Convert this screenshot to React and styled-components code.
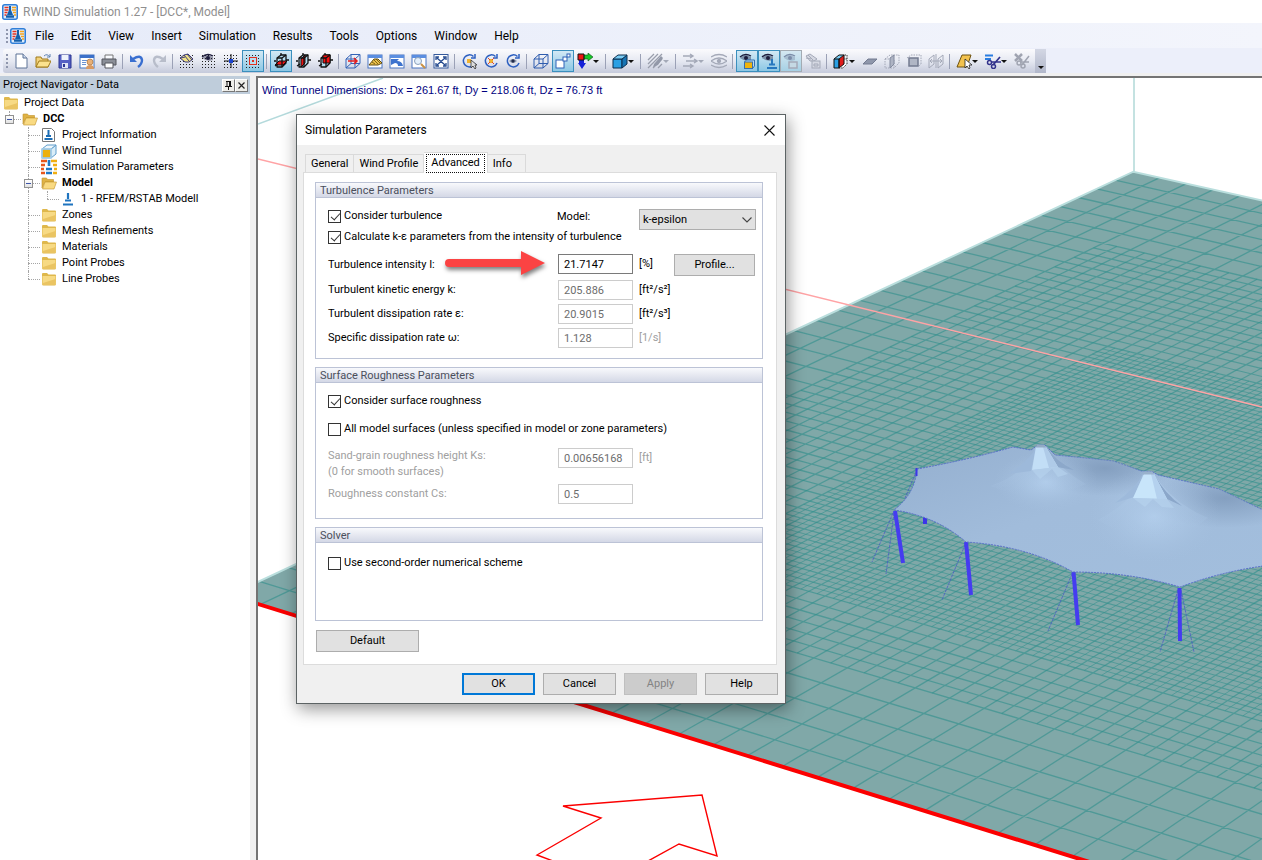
import * as React from "react"
import styled, { createGlobalStyle, css } from "styled-components"

const GlobalStyle = createGlobalStyle`
  * {
    box-sizing: border-box;
  }
  body {
    margin: 0;
    background: #f0f0f0;
    color: #000;
    font-family: Roboto, "Open Sans", sans-serif;
    font-size: 11px;
    line-height: 16px;
  }
  button, input, select {
    font: inherit;
    color: inherit;
    border-radius: 0;
    margin: 0;
  }
`

const menus = ["File", "Edit", "View", "Insert", "Simulation", "Results", "Tools", "Options", "Window", "Help"]

// ---------- icons ----------

const Logo = () => (
  <svg width="16" height="16" viewBox="0 0 16 16">
    <rect x=".75" y=".75" width="14.500" height="14.500" rx="2" fill="#dcebfa" stroke="#2f7ed8" strokeWidth="1.500" />
    <path d="M2.500 3.500h4M2.500 6h4M2.500 8.500h3M2.500 11h2" stroke="#e8321e" strokeWidth="1.600" />
    <path d="M10 3.500h4M10 6h4M11 8.500h3M12 11h2" stroke="#f6a51c" strokeWidth="1.600" />
    <path d="M7 2h2v4l2 5H5l2-5z" fill="#1460ac" />
    <path d="M4 12.500h8" stroke="#1460ac" strokeWidth="2.500" />
  </svg>
)

const dots = (
  <path
    d="M1 2.500h15M1 5.500h15M1 8.500h15M1 11.500h15M1 14.500h15"
    stroke="#222"
    strokeDasharray="1 2"
    fill="none"
  />
)

const eye = (c) => (
  <g>
    <path d="M1 5q5-5 11-1v3Q6 9 1 5z" fill={c} opacity=".4" />
    <path d="M1 4Q6-.5 12 3" stroke={c} strokeWidth="1.300" fill="none" />
    <circle cx="7" cy="5" r="2" fill={c} />
  </g>
)

const cube = (front, side, top, line) => (
  <g stroke={line} strokeLinejoin="round">
    <path d="M1 6h9v9H1z" fill={front} />
    <path d="M10 6l5-4v9l-5 4z" fill={side} />
    <path d="M1 6l5-4h9l-5 4z" fill={top} />
  </g>
)

const wire = (c) => (
  <path d="M1 6h9v9H1zM6 1.500h9v9H6zM1 6l5-4.500M10 6l5-4.500M10 15l5-4.500M1 15l5-4.500" fill="none" stroke={c} />
)

const plane = (fill, part) => (
  <g strokeLinejoin="round">
    <path d="M4 5l4-3h5v8l-4 4H4z" fill="#b5dcf0" stroke="#111" strokeWidth="1.300" />
    <path d={part} fill={fill} stroke="#111" />
    <path d="M4 5h5v9M9 5l4-3M1 8h2M13 7h3M2 13l3-2M8 0v2" stroke="#111" strokeWidth="1.300" fill="none" />
  </g>
)

const panel = (
  <g>
    <rect x="1" y="2" width="14" height="13" fill="#fff" stroke="#4a74c0" />
    <path d="M1 2h14v3H1z" fill="#5b8ee0" />
  </g>
)

const rotate = (
  <path d="M12.500 3.500A6 6 0 1 0 14 10M14 1v4h-4" fill="none" stroke="#2c5fc0" strokeWidth="1.500" />
)

const ghost = "#a4a9b8"

const icons = {
  new: (
    <g>
      <path d="M3 1h7l4 4v10H3z" fill="#fff" stroke="#5d7396" />
      <path d="M10 1v4h4" fill="#cfdcf0" stroke="#5d7396" />
    </g>
  ),
  open: (
    <g>
      <path d="M1 14V4h5l1 2h6v8z" fill="#f3d27b" stroke="#a07b1b" />
      <path d="M1 14l3-6h12l-3 6z" fill="#fbe28f" stroke="#a07b1b" />
      <path d="M9 3q3-3 6 1M15 1v3h-3" fill="none" stroke="#5f82b2" />
    </g>
  ),
  save: (
    <g>
      <path d="M2 2h12v13H2z" fill="#5560c4" stroke="#2b3590" />
      <path d="M4.500 2h7v5h-7z" fill="#eef2fb" />
      <path d="M5 10h6v5H5z" fill="#dfe4f5" />
      <path d="M6 11h2v3H6z" fill="#2b3590" />
    </g>
  ),
  info: (
    <g>
      <rect x="1" y="2" width="14" height="13" fill="#fff" stroke="#4574bd" />
      <path d="M1 2h14v3H1z" fill="#3b70c9" />
      <path d="M3 7.500h5M3 9.500h4M3 11.500h4" stroke="#6a93d2" />
      <circle cx="11" cy="9" r="3" fill="#e8b077" stroke="#9b6530" strokeWidth=".6" />
      <path d="M7 16q0-4 4-4t4 4z" fill="#d99a62" />
    </g>
  ),
  print: (
    <g>
      <path d="M4 2h8v5H4z" fill="#f8fafe" stroke="#777" />
      <path d="M1 6h14v6H1z" fill="#8b8f98" stroke="#54575e" />
      <path d="M4 10h8v5H4z" fill="#fff" stroke="#54575e" />
    </g>
  ),
  undo: (
    <g>
      <path d="M4 6q8-5 9 1 0 4-4 7" fill="none" stroke="#3a6fd0" strokeWidth="2.400" />
      <path d="M1 2v7h7z" fill="#3a6fd0" />
    </g>
  ),
  redo: (
    <g>
      <path d="M12 6Q4 1 3 7q0 4 4 7" fill="none" stroke="#b8bdca" strokeWidth="2.400" />
      <path d="M15 2v7H8z" fill="#b8bdca" />
    </g>
  ),
  gridHand: (
    <g>
      {dots}
      <path d="M1 5l4-3 4-1 5 5-4 3-4 0z" fill="#f1e287" stroke="#3a3a78" />
      <path d="M5 2l5 6M8 1l5 6M2 5l4-1" stroke="#3a3a78" />
    </g>
  ),
  gridEye: (
    <g>
      {dots}
      {eye("#1c1c3c")}
    </g>
  ),
  gridCross: (
    <g>
      {dots}
      <path d="M1 8h14M8 1v14" stroke="#111" />
      <rect x="6" y="6" width="4" height="4" fill="#1b43d0" />
    </g>
  ),
  gridSnap: (
    <g>
      {dots}
      <rect x="3" y="3" width="10" height="10" fill="#b9dcee" />
      <rect x="4.500" y="4.500" width="7" height="7" fill="none" stroke="#e03020" />
      <rect x="7" y="7" width="2" height="2" fill="#e03020" />
    </g>
  ),
  planeXY: plane("#e81414", "M2 12l4-4h8l-4 4z"),
  planeYZ: plane("#e81414", "M6 6l4-4v8l-4 4z"),
  planeXZ: plane("#fb1010", "M6 2h7v8H6z"),
  boxArrow: (
    <g>
      {wire("#3464b8")}
      <path d="M3 8h9M9 5l3 3-3 3" stroke="#e81c1c" strokeWidth="1.500" fill="none" />
    </g>
  ),
  winHand: (
    <g>
      {panel}
      <path d="M2 12l5-6h4l4 4-4 2z" fill="#ecc14b" stroke="#604b10" />
      <path d="M7 7l4 4M9 6l4 4M5 9l3 2" stroke="#604b10" strokeWidth=".8" />
    </g>
  ),
  winBack: (
    <g>
      {panel}
      <path d="M2 6h8L8 8q5 0 6 5H9q0-3-3-3l-4 2z" fill="#3d73ce" />
    </g>
  ),
  winZoom: (
    <g>
      {panel}
      <circle cx="7" cy="8" r="3.500" fill="#e3effb" stroke="#8ba0bb" />
      <path d="M10 11l4 4" stroke="#c99043" strokeWidth="2" />
    </g>
  ),
  winFit: (
    <g>
      <rect x="1" y="1.500" width="14" height="13.500" fill="#fff" stroke="#35599b" />
      <path d="M4 5l8 7M12 5l-8 7M3 7V4h3M10 4h3v3M13 10v3h-3M6 13H3v-3" stroke="#24498f" strokeWidth="1.300" fill="none" />
    </g>
  ),
  rotCursor: (
    <g>
      {rotate}
      <rect x="6" y="6" width="4" height="4" fill="#f0b32f" />
      <path d="M10 7v8l2-2 2 3 1-1-1-3h2z" fill="#ddd" stroke="#333" strokeWidth=".8" />
    </g>
  ),
  rotCenter: (
    <g>
      {rotate}
      <rect x="6" y="6" width="4" height="4" fill="#f0b32f" />
      <path d="M5 5l2 2M11 5L9 7M5 11l2-2M11 11l-2-2" stroke="#e34b24" />
    </g>
  ),
  rotView: (
    <g>
      {rotate}
      <path d="M4 8q4-4 8 0-4 4-8 0z" fill="#8e98ad" />
      <circle cx="8" cy="8" r="1.700" fill="#222c4c" />
    </g>
  ),
  wire: wire("#2f5cae"),
  perspective: (
    <g fill="#fff" stroke="#2f63b8">
      <rect x="1" y="7" width="8" height="8" />
      <rect x="8" y="4" width="4" height="4" />
      <rect x="12" y="1" width="3" height="3" />
    </g>
  ),
  axes: (
    <g>
      <path d="M1 1h6v6H1z" fill="#ee1414" />
      <path d="M7 2h4V0l5 4-5 4V6H7z" fill="#17c62a" stroke="#0b5015" strokeWidth=".6" />
      <path d="M2 7h5v3h2l-4 6-4-6h1z" fill="#1522d8" />
      <path d="M1 1h6v6H1z" fill="none" stroke="#111" />
    </g>
  ),
  solid: cube("#2ba0e3", "#1674b4", "#79ccf5", "#0c2f4e"),
  hatch: (
    <g>
      <path d="M1 7l6-6M1 11L11 1M1 15L15 1M6 15L15 6M11 15l4-4" stroke="#999eac" strokeWidth="1.300" />
      <path d="M7 11l7-8 2 2-5 7-5 2z" fill="#9298a8" />
    </g>
  ),
  flow: <path d="M1 3h10M8 1l3 2-3 2M4 8h11M12 6l3 2-3 2M1 13h10M8 11l3 2-3 2" stroke={ghost} strokeWidth="1.400" fill="none" />,
  stream: (
    <g stroke={ghost} strokeWidth="1.300" fill="none">
      <path d="M0 4q8-5 16 0M0 8q8-6 16 0M0 8q8 6 16 0M0 12q8 5 16 0" />
      <circle cx="8" cy="8" r="1.500" fill={ghost} />
    </g>
  ),
  eyeBox: (
    <g>
      {eye("#1c1c3c")}
      <path d="M5.500 9l2-2h8v6l-2 2.500" fill="#b9dcf2" stroke="#356fb0" />
      <rect x="5.500" y="9" width="8" height="6.500" fill="#efb40d" stroke="#356fb0" />
    </g>
  ),
  eyeModel: (
    <g>
      {eye("#1c1c3c")}
      <path d="M11 6v6M8 11.500h6M6 15h10" stroke="#2878bf" strokeWidth="2" />
    </g>
  ),
  eyeGhost: (
    <g>
      {eye("#7b8ca8")}
      <rect x="6" y="9" width="8" height="6" fill="#c5d9e4" stroke={ghost} strokeWidth="1.500" />
    </g>
  ),
  handGhost: (
    <g stroke={ghost} fill="#d5d8e2">
      <path d="M1 3l4-2 7 5-3 2H5zM3 2l5 5M1 5l5 1" />
      <rect x="7" y="8" width="8" height="7" />
      <path d="M9 11h4v2H9z" />
    </g>
  ),
  clipBox: (
    <g>
      <path d="M10 6h4v5l-4 4H6M14 6V2h-3" fill="#f7f9fc" stroke="#333" strokeDasharray="1.500 1" />
      <path d="M1 6h5v9H1z" fill="#2ba0e3" />
      <path d="M1 6l5-4h5L6 6z" fill="#79ccf5" />
      <path d="M6 6l5-4v9l-5 4z" fill="#e01c1c" stroke="#111" />
      <path d="M1 6h5v9H1zM1 6l5-4h5" fill="none" stroke="#111" />
    </g>
  ),
  faceBottom: <path d="M1 11l5-5h9l-5 5z" fill="#8f97ab" stroke="#737b90" />,
  faceSide: (
    <g stroke={ghost} fill="none">
      <path d="M1 6h9v9H1zM1 6l5-4h9v8l-5 5" strokeDasharray="1.500 1" />
      <path d="M6 5l4-3v9l-4 4z" fill="#adb3c3" stroke="#828a9e" />
    </g>
  ),
  faceFront: (
    <g>
      <path d="M1 5l4-3h10v9l-2 2" fill="none" stroke={ghost} strokeDasharray="1.500 1" />
      <path d="M3 5h9v8H3z" fill="#b0b6c5" stroke="#737b90" strokeWidth="1.500" />
    </g>
  ),
  faceMirror: (
    <g stroke={ghost} fill="none">
      <path d="M1 6v9l5-4V2zM10 6v9l5-4V2zM8 1v14M2 8h12M4 6L2 8l2 2M12 6l2 2-2 2" />
    </g>
  ),
  polySelect: (
    <g>
      <path d="M1 14L6 2h9l-4 12z" fill="#f2c24e" stroke="#6e5210" />
      <path d="M9 6v9l2-2 2 3 1-1-1-3h3z" fill="#fff" stroke="#222" strokeWidth=".8" />
    </g>
  ),
  cutLines: (
    <g>
      <path d="M0 2.500h8M0 6h6" stroke="#2a7de0" strokeWidth="2" />
      <path d="M15 4L8 12M16 9L6 9" stroke="#32328c" strokeWidth="1.700" />
      <circle cx="4.500" cy="9.500" r="2" fill="none" stroke="#32328c" strokeWidth="1.500" />
      <circle cx="8.500" cy="13.500" r="2" fill="none" stroke="#32328c" strokeWidth="1.500" />
    </g>
  ),
  cutGhost: (
    <g stroke="#a0a4b1" fill="none" strokeWidth="1.500">
      <path d="M1 1l7 7M8 1L1 8" strokeWidth="2.500" />
      <path d="M15 3L8 12M15 9H6" />
      <circle cx="5" cy="10" r="2" />
      <circle cx="9" cy="13" r="2" />
    </g>
  ),
}

const tools = [
  ["new"], ["open"], ["save"], ["info"], ["print"], "|",
  ["undo"], ["redo"], "|",
  ["gridHand"], ["gridEye"], ["gridCross"], ["gridSnap", "on"], "|",
  ["planeXY", "on"], ["planeYZ"], ["planeXZ"], "|",
  ["boxArrow"], ["winHand"], ["winBack"], ["winZoom"], ["winFit"], "|",
  ["rotCursor"], ["rotCenter"], ["rotView"], "|",
  ["wire"], ["perspective", "on"], ["axes", "drop"], "|",
  ["solid", "drop"], "|",
  ["hatch", "drop"], "|",
  ["flow", "drop"], ["stream"], "|",
  ["eyeBox", "on"], ["eyeModel", "on"], ["eyeGhost", "dim"], ["handGhost"], "|",
  ["clipBox", "drop"], ["faceBottom"], ["faceSide"], ["faceFront"], ["faceMirror"], "|",
  ["polySelect", "drop"], ["cutLines", "drop"], ["cutGhost"],
]

const ToolIcon = ({ name }) => (
  <svg width="16" height="16" viewBox="0 0 16 16" aria-hidden="true">
    {icons[name]}
  </svg>
)

const treeIcons = {
  folder: (
    <g>
      <path d="M1 3q0-1 1-1h4l1.500 1.500H14q1 0 1 1V13q0 1.500-1.500 1.500h-11Q1 14.500 1 13z" fill="#dfb84c" />
      <path d="M1.500 5h13v8q0 1-1 1h-11q-1 0-1-1z" fill="#f7da84" />
      <path d="M2 14h12l.5-6L2 12z" fill="#eac462" />
    </g>
  ),
  open: (
    <g>
      <path d="M1 13V3.500q0-.500.500-.500h4l1 1.500h6V7H4z" fill="#dfb245" stroke="#c1922a" strokeWidth=".6" />
      <path d="M1.500 14L4 7h11.500L13 14z" fill="#f9da82" stroke="#c1922a" strokeWidth=".6" />
    </g>
  ),
  doc: (
    <g>
      <path d="M1.500 1.500h9l3 3v10h-12z" fill="#fff" stroke="#777" />
      <path d="M7.500 3v5M5 9h5M3.500 12h8" stroke="#1b6db5" strokeWidth="2" />
    </g>
  ),
  tunnel: (
    <g>
      {cube("#ecb00d", "#d9edf8", "#eef7fc", "#5f9dcc")}
      <path d="M1 6h9v9H1z" fill="none" stroke="#a8d0ea" strokeWidth="1.500" />
    </g>
  ),
  params: (
    <g strokeWidth="2.600">
      <path d="M0 2h6M0 6h4M0 10h3M0 14h4" stroke="#e7571c" />
      <path d="M10 2h6M12 6h4M13 10h3M12 14h4" stroke="#f0ae12" />
      <path d="M8 1v6M5 10h6M5 14h6" stroke="#1f7ac8" />
    </g>
  ),
  model: (
    <path d="M8 2v6M5 9.500h6M3 13.500h10" stroke="#1f74bf" strokeWidth="2.200" />
  ),
}

const TreeIcon = ({ name }) => (
  <svg width="16" height="16" viewBox="0 0 16 16" aria-hidden="true">
    {treeIcons[name]}
  </svg>
)

// guides: one entry per indent column
const tree = [
  { text: "Project Data", icon: "folder", guides: [] },
  { text: "DCC", icon: "open", guides: ["end"], expand: true, bold: true },
  { text: "Project Information", icon: "doc", guides: ["none", "tee"] },
  { text: "Wind Tunnel", icon: "tunnel", guides: ["none", "tee"] },
  { text: "Simulation Parameters", icon: "params", guides: ["none", "tee"] },
  { text: "Model", icon: "open", guides: ["none", "tee"], expand: true, bold: true },
  { text: "1 - RFEM/RSTAB Modell", icon: "model", guides: ["none", "line", "end"] },
  { text: "Zones", icon: "folder", guides: ["none", "tee"] },
  { text: "Mesh Refinements", icon: "folder", guides: ["none", "tee"] },
  { text: "Materials", icon: "folder", guides: ["none", "tee"] },
  { text: "Point Probes", icon: "folder", guides: ["none", "tee"] },
  { text: "Line Probes", icon: "folder", guides: ["none", "end"] },
]

// ---------- wind tunnel scene ----------

const project = (u, v) => {
  const w = 1 - 0.00323 * u - 0.0057 * v
  const x = 1133.3 + (26.4 * u - 18.02 * v) / w
  const y = 171.7 + (5.92 * u + 8.446 * v) / w
  return x.toFixed(1) + " " + y.toFixed(1)
}

const range = (from, to, step) => {
  const out = []
  for (let i = from; i <= to; i += step) out.push(i)
  return out
}

const meshPath = (u0, u1, v0, v1, first, step) =>
  range(u0 + first, u1, step).map(u => `M${project(u, v0)}L${project(u, v1)}`).join("") +
  range(v0 + first, v1, step).map(v => `M${project(u0, v)}L${project(u1, v)}`).join("")

const coarse = meshPath(0, 40, 0, 39, 1, 1)
const medium = meshPath(3, 36, 6, 34, 0.5, 1)
const fine = meshPath(8, 32, 13, 31, 0.25, 0.5)

const roof =
  "M917 469Q967 460 1013 447L1031 450L1038 445L1045 445L1055 455Q1086 458 1113 461Q1128 466 1141 471L1152 471.500L1158 475L1219 489L1263 510" +
  "V566Q1220 572 1180 587Q1130 572 1073 572Q1028 546 966 542Q936 516 894 510Q915 494 917 469Z"

const posts = [
  [895, 511, 903, 563],
  [966, 542, 971, 595],
  [1073.500, 572, 1078, 625],
  [1179.500, 588, 1180, 641],
]

const Scene = () => (
  <SceneSvg viewBox="258 78 1004 782" preserveAspectRatio="xMinYMin slice" role="img" aria-label="Wind tunnel model">
    <defs>
      <linearGradient id="roof" x1="0" y1="0" x2="1" y2="1">
        <stop offset="0" stopColor="#94afcf" />
        <stop offset=".45" stopColor="#a1bcdb" />
        <stop offset="1" stopColor="#a2bedd" />
      </linearGradient>
      <radialGradient id="back">
        <stop offset="0" stopColor="#7d98b9" stopOpacity=".8" />
        <stop offset="1" stopColor="#7d98b9" stopOpacity="0" />
      </radialGradient>
      <radialGradient id="glow">
        <stop offset="0" stopColor="#bad6f3" stopOpacity=".8" />
        <stop offset="1" stopColor="#a5c0df" stopOpacity="0" />
      </radialGradient>
      <linearGradient id="flare" x1="0" y1="0" x2="0" y2="1">
        <stop offset="0" stopColor="#afcbe9" />
        <stop offset="1" stopColor="#a5c0df" stopOpacity="0" />
      </linearGradient>
      <clipPath id="roofClip">
        <path d={roof} />
      </clipPath>
    </defs>
    <path d={`M${project(0, 0)}L${project(40, 0)}L${project(40, 39)}L${project(0, 39)}Z`} fill="#80a8a8" />
    <g fill="none" stroke="#2f8f8c" strokeOpacity=".6">
      <path d={coarse} strokeWidth="1.300" />
      <path d={medium} strokeWidth="1.200" />
      <path d={fine} strokeWidth=".9" />
    </g>
    <path d={`M${project(0, 39)}L${project(0, 0)}L${project(40, 0)}`} fill="none" stroke="#b9dedd" strokeWidth="2" />
    <path d="M1134 171V78" stroke="#b0d8d7" strokeWidth="1.500" />
    <path d="M258 124L383 78" stroke="#b4dadc" strokeWidth="1.500" />
    <path d="M258 159L1262 407" stroke="#ffa3a5" strokeWidth="1.500" />
    <path d="M250 601.500L1262 915.500" stroke="#fb0000" strokeWidth="4" />
    <path d="M553 861L537 855L601 818L563 806L702 795L717 856L679 844L648 861" fill="none" stroke="#fb0000" strokeWidth="1.400" />
    <g stroke="#4b5bc4" strokeWidth=".8" strokeDasharray="3 1">
      <path d="M893 513L872 562M894 513L886 574M965 545L942 600M1072 574L1048 631M1178 590L1160 652M1181 590L1194 652M917 470L905 498" />
    </g>
    <path d="M925 516v8" stroke="#3c35e8" strokeWidth="4" />
    <g stroke="#453cf0" strokeWidth="4">
      {posts.map(([x1, y1, x2, y2]) => (
        <path key={x1} d={`M${x1} ${y1}L${x2} ${y2}`} />
      ))}
    </g>
    <path d={roof} fill="url(#roof)" stroke="#5566c9" strokeWidth=".9" strokeDasharray="2 1" />
    <g clipPath="url(#roofClip)">
      <ellipse cx="1105" cy="468" rx="72" ry="28" fill="url(#back)" />
      <ellipse cx="1225" cy="498" rx="80" ry="30" fill="url(#back)" />
      <ellipse cx="1046" cy="482" rx="52" ry="30" fill="url(#glow)" />
      <ellipse cx="1154" cy="516" rx="66" ry="48" fill="url(#glow)" />
    </g>
    <path d="M1036 447Q1026 474 990 486Q1040 506 1086 484Q1060 470 1047 447Z" fill="url(#flare)" />
    <path d="M1143 474Q1136 500 1098 520Q1155 556 1208 518Q1172 503 1154 474Z" fill="url(#flare)" />
    <path d="M1036 447Q1029 462 1008 474L1031 471Z" fill="#9db9da" />
    <path d="M1036 447L1047 447Q1055 461 1074 470L1057 467Z" fill="#8ca8ca" />
    <path d="M1036 447L1046 447L1058 467L1032 470Z" fill="#c2def6" />
    <path d="M1043 447L1046 447L1058 467L1049 468Z" fill="#afcbe8" />
    <path d="M1037 444.500h7l2 3h-10z" fill="#93aac5" />
    <path d="M1143 474Q1136 488 1115 503L1134 497Z" fill="#9ebadb" />
    <path d="M1143 474L1154 474Q1165 494 1182 506L1167 499Z" fill="#8ba7ca" />
    <path d="M1144 474L1154 474L1167 499L1133 498Z" fill="#c8e5fa" />
    <path d="M1151 474L1154 474L1167 499L1157 499Z" fill="#b4d1ee" />
    <path d="M1144 471.500h8l2 3h-11z" fill="#9ab2cc" />
    <path d="M1032 470l8 9 12-10 6 8 10-3-10-7zM1133 498l12 9 8-8 9 8 12 1-7-9z" fill="#b7d3ef" opacity=".6" />
    <path d="M916.500 468v8" stroke="#3c35e8" strokeWidth="2" />
  </SceneSvg>
)

// ---------- page ----------

const Check = ({ id, children, checked }) => (
  <CheckRow>
    <CheckBox type="checkbox" id={id} defaultChecked={checked} />
    <label htmlFor={id}>{children}</label>
  </CheckRow>
)

const Field = ({ id, label, value, unit, disabled, unitDisabled, labelDisabled, children }) => (
  <FieldRow>
    <FieldLabel htmlFor={id} $muted={labelDisabled}>{label}</FieldLabel>
    <TextBox id={id} defaultValue={value} disabled={disabled} />
    <Unit $muted={unitDisabled}>{unit}</Unit>
    {children}
  </FieldRow>
)

const SimulationDialog = () => (
  <Dialog role="dialog" aria-labelledby="dialog-title">
    <DialogTitle>
      <span id="dialog-title">Simulation Parameters</span>
      <CloseButton aria-label="Close">
        <svg width="11" height="11" viewBox="0 0 11 11">
          <path d="M.5.5l10 10M10.500.5l-10 10" stroke="#111" strokeWidth="1.100" />
        </svg>
      </CloseButton>
    </DialogTitle>
    <Tabs role="tablist">
      <Tab role="tab">General</Tab>
      <Tab role="tab">Wind Profile</Tab>
      <Tab role="tab" aria-selected="true" $active><span>Advanced</span></Tab>
      <Tab role="tab" $wide>Info</Tab>
    </Tabs>
    <TabPanel>
      <Group>
        <GroupTitle>Turbulence Parameters</GroupTitle>
        <ModelRow>
          <Check id="turb" checked>Consider turbulence</Check>
          <label htmlFor="model">Model:</label>
          <SelectWrap>
            <Select id="model" defaultValue="k-epsilon">
              <option>k-epsilon</option>
            </Select>
            <svg width="10" height="6" viewBox="0 0 10 6" aria-hidden="true">
              <path d="M.5.5L5 5L9.500.5" fill="none" stroke="#444" strokeWidth="1.100" />
            </svg>
          </SelectWrap>
        </ModelRow>
        <Check id="calc" checked>Calculate k-ε parameters from the intensity of turbulence</Check>
        <Fields>
          <Field id="intensity" label="Turbulence intensity I:" value="21.7147" unit="[%]">
            <ProfileButton>Profile...</ProfileButton>
          </Field>
          <Field id="energy" label="Turbulent kinetic energy k:" value="205.886" unit="[ft²/s²]" disabled />
          <Field id="eps" label="Turbulent dissipation rate ε:" value="20.9015" unit="[ft²/s³]" disabled />
          <Field id="omega" label="Specific dissipation rate ω:" value="1.128" unit="[1/s]" disabled unitDisabled />
        </Fields>
      </Group>
      <Group>
        <GroupTitle>Surface Roughness Parameters</GroupTitle>
        <CheckStack>
          <Check id="rough" checked>Consider surface roughness</Check>
          <Check id="all">All model surfaces (unless specified in model or zone parameters)</Check>
        </CheckStack>
        <RoughnessFields>
          <Field
            id="ks"
            label={<>Sand-grain roughness height Ks:<br />(0 for smooth surfaces)</>}
            value="0.00656168"
            unit="[ft]"
            disabled
            unitDisabled
            labelDisabled
          />
          <Field id="cs" label="Roughness constant Cs:" value="0.5" disabled labelDisabled />
        </RoughnessFields>
      </Group>
      <Group>
        <GroupTitle>Solver</GroupTitle>
        <SolverBody>
          <Check id="second">Use second-order numerical scheme</Check>
        </SolverBody>
      </Group>
      <DefaultButton>Default</DefaultButton>
    </TabPanel>
    <Actions>
      <ActionButton $primary>OK</ActionButton>
      <ActionButton>Cancel</ActionButton>
      <ActionButton disabled>Apply</ActionButton>
      <ActionButton>Help</ActionButton>
    </Actions>
    <Pointer width="110" height="36" viewBox="0 0 110 36" aria-hidden="true">
      <path d="M8 10h72V2l24 12-24 12v-8H8a4 4 0 0 1 0-8z" fill="#fb4343" />
    </Pointer>
  </Dialog>
)

const App = () => (
  <Window>
    <GlobalStyle />
    <TitleBar>
      <Logo />
      <span>RWIND Simulation 1.27 - [DCC*, Model]</span>
    </TitleBar>
    <MenuBar>
      <Grip />
      <Logo />
      <MenuItems>
        {menus.map(m => (
          <MenuButton key={m}>{m}</MenuButton>
        ))}
      </MenuItems>
    </MenuBar>
    <ToolArea>
      <Toolbar>
        <Grip />
        {tools.map((t, i) =>
          t === "|" ? (
            <Separator key={i} />
          ) : (
            <ToolButton key={i} aria-label={t[0]} $mode={t[1]}>
              <ToolIcon name={t[0]} />
              {t[1] === "drop" && <Caret $muted={t[0] === "hatch" || t[0] === "flow"} />}
            </ToolButton>
          )
        )}
        <ToolEnd aria-label="More buttons">
          <Caret />
        </ToolEnd>
      </Toolbar>
    </ToolArea>
    <Workspace>
      <Navigator>
        <NavigatorHeader>
          <span>Project Navigator - Data</span>
          <PaneButton aria-label="Pin">
            <svg width="9" height="9" viewBox="0 0 9 9">
              <path d="M2 .5h5M3 .5v5M5.500.5v5M6.500.5v5M1 5.500h7M4.500 5.500V9" stroke="#111" fill="none" />
            </svg>
          </PaneButton>
          <PaneButton aria-label="Close pane">
            <svg width="7" height="7" viewBox="0 0 7 7">
              <path d="M.5.5l6 6M6.500.5l-6 6" stroke="#222" strokeWidth="1.200" />
            </svg>
          </PaneButton>
        </NavigatorHeader>
        <Tree>
          {tree.map(item => (
            <TreeRow key={item.text}>
              {item.guides.map((g, i) => (
                <Guide key={i} $kind={g}>
                  {item.expand && i === item.guides.length - 1 && <Expander aria-label={"Collapse " + item.text} />}
                </Guide>
              ))}
              <TreeIcon name={item.icon} />
              <TreeText $bold={item.bold}>{item.text}</TreeText>
            </TreeRow>
          ))}
        </Tree>
      </Navigator>
      <Viewport>
        <Scene />
        <Dimensions>Wind Tunnel Dimensions: Dx = 261.67 ft, Dy = 218.06 ft, Dz = 76.73 ft</Dimensions>
        <SimulationDialog />
      </Viewport>
    </Workspace>
  </Window>
)

export default App

const Window = styled.div`
  display: flex;
  flex-direction: column;
  height: 100vh;
  overflow: hidden;
`
const TitleBar = styled.header`
  display: flex;
  align-items: center;
  gap: 5px;
  height: 23px;
  padding: 0 2px;
  background: #fff;
  color: #8f8f8f;
  font-size: 12px;
`
const MenuBar = styled.nav`
  display: flex;
  align-items: center;
  height: 25px;
  padding-left: 6px;
  background: linear-gradient(90deg, #e6ebf9, #f3f5fc);
`
const MenuItems = styled.div`
  display: flex;
  gap: 17px;
  margin-left: 9px;
`
const MenuButton = styled.button`
  padding: 0;
  border: none;
  background: none;
  font-size: 12px;
`
const Grip = styled.span`
  flex: none;
  width: 2px;
  height: 14px;
  margin-right: 2px;
  background: repeating-linear-gradient(#8f96ad 0 2px, transparent 2px 4px);
`
const ToolArea = styled.div`
  display: flex;
  flex: none;
  height: 28px;
  padding: 1px 3px 3px;
  background: linear-gradient(#eceffa 0 25px, #f0f0f0 25px);
`
const Toolbar = styled.div`
  display: flex;
  align-items: center;
  padding-left: 3px;
  border-radius: 3px;
  background: linear-gradient(#fbfbfd, #e6e9f2 50%, #c5cadb);
`
const ToolButton = styled.button`
  display: flex;
  flex: none;
  align-items: center;
  width: ${props => (props.$mode === "drop" ? "29px" : "22px")};
  height: 22px;
  padding: 0 2px;
  border: 1px solid transparent;
  background: none;

  svg {
    flex: none;
  }
  ${props => props.$mode === "on" && css`
    border-color: #3b8fbd;
    background: linear-gradient(#d3e9f5, #8cc7e4);
  `}
  ${props => props.$mode === "dim" && css`
    border-color: #a3abb3;
    background: linear-gradient(#d5e8f2, #a6d0e4);
  `}
`
const Caret = styled.span`
  flex: none;
  border: 3px solid transparent;
  border-top-color: ${props => (props.$muted ? "#a4a9b8" : "#111")};
  border-bottom: none;
`
const Separator = styled.span`
  flex: none;
  width: 1px;
  height: 15px;
  margin: 0 3px 0 2px;
  background: #9ba1b6;
`
const ToolEnd = styled.button`
  display: flex;
  align-items: flex-end;
  justify-content: center;
  width: 11px;
  height: 24px;
  margin-left: 2px;
  padding: 0 0 4px;
  border: none;
  background: linear-gradient(#d3d7e4, #b1b7ca);
`
const Workspace = styled.div`
  display: flex;
  flex: 1;
  min-height: 0;
`
const Navigator = styled.aside`
  flex: none;
  width: 250px;
  margin-right: 6px;
  background: #fff;
`
const NavigatorHeader = styled.div`
  display: flex;
  align-items: center;
  height: 18px;
  padding: 0 2px 0 3px;
  background: #bfcddb;

  span {
    flex: 1;
  }
`
const PaneButton = styled.button`
  display: flex;
  align-items: center;
  justify-content: center;
  width: 13px;
  height: 13px;
  padding: 0;
  border: 1px solid;
  border-color: #fff #777 #777 #fff;
  background: #eeeeea;
`
const Tree = styled.ul`
  margin: 0;
  padding: 1px 3px;
  list-style: none;
`
const TreeRow = styled.li`
  display: flex;
  align-items: center;
  height: 16px;
`
const TreeText = styled.span`
  margin-left: 5px;
  font-weight: ${props => (props.$bold ? "bold" : "normal")};
`
const Guide = styled.span`
  display: grid;
  width: 19px;
  height: 16px;
  padding-left: 6px;

  &::before {
    content: "";
    grid-area: 1 / 1;
    width: 12px;
    height: ${props => (props.$kind === "end" ? "8px" : "16px")};
    border-left: ${props => (props.$kind === "none" ? "none" : "1px dotted #a5a5a5")};
  }
  &::after {
    content: "";
    grid-area: 1 / 1;
    width: 12px;
    height: 8px;
    border-bottom: ${props => (props.$kind === "tee" || props.$kind === "end" ? "1px dotted #a5a5a5" : "none")};
  }
`
const Expander = styled.button`
  grid-area: 1 / 1;
  z-index: 1;
  width: 9px;
  height: 9px;
  margin: 4px 0 0 -4px;
  padding: 0;
  border: 1px solid #919191;
  background: linear-gradient(#3d55a8, #3d55a8) center / 5px 1px no-repeat, linear-gradient(#fff, #e2e2e2);
`
const Viewport = styled.main`
  position: relative;
  flex: 1;
  min-width: 0;
  overflow: hidden;
  border-top: 2px solid #747474;
  border-left: 2px solid #747474;
  background: #fff;
`
const SceneSvg = styled.svg`
  display: block;
  width: 100%;
  height: 100%;
`
const Dimensions = styled.span`
  position: absolute;
  top: 4px;
  left: 4px;
  color: #000080;
  font-family: "Liberation Sans", sans-serif;
`
const Dialog = styled.section`
  position: absolute;
  top: 36px;
  left: 38px;
  width: 490px;
  border: 1px solid #5c6364;
  background: #f0f0f0;
  box-shadow: 2px 5px 16px rgba(0, 0, 0, 0.42);
`
const DialogTitle = styled.div`
  display: flex;
  align-items: center;
  justify-content: space-between;
  height: 30px;
  padding: 0 10px 0 8px;
  background: #fff;
  font-size: 12px;
`
const CloseButton = styled.button`
  display: flex;
  padding: 0;
  border: none;
  background: none;
`
const Tabs = styled.div`
  display: flex;
  align-items: flex-end;
  height: 27px;
  padding-left: 8px;
`
const Tab = styled.button`
  height: 18px;
  padding: 0 5px;
  border: 1px solid #dadada;
  border-bottom: none;
  background: #f0f0f0;
  line-height: 16px;
  text-align: left;

  & + & {
    border-left: none;
  }
  ${props => props.$wide && css`
    width: 38px;
  `}
  ${props => props.$active && css`
    display: flex;
    z-index: 1;
    height: 21px;
    margin-bottom: -1px;
    padding: 1px 2px 0;
    background: #fff;

    span {
      padding: 0 4px;
      border: 1px dotted #111;
    }
  `}
`
const TabPanel = styled.div`
  display: flex;
  flex-direction: column;
  gap: 8px;
  height: 493px;
  margin: 0 8px 0 6px;
  padding: 9px 13px 12px 11px;
  border: 1px solid #dcdcdc;
  background: #fff;
`
const Group = styled.section`
  padding-bottom: 10px;
  border: 1px solid #bcc3d6;
`
const GroupTitle = styled.h3`
  height: 15px;
  margin: 0 0 11px;
  padding-left: 4px;
  border-bottom: 1px solid #bcc3d6;
  background: linear-gradient(#f8f9fc, #d4d8e6);
  color: #4a4f5c;
  font-size: 11px;
  font-weight: normal;
  line-height: 15px;
`
const CheckRow = styled.div`
  display: flex;
  align-items: center;
  gap: 3px;
  height: 14px;
  margin-left: 12px;
`
const CheckBox = styled.input`
  flex: none;
  width: 13px;
  height: 13px;
  appearance: none;
  border: 1px solid #333;
  background: #fff;

  &:checked::after {
    content: "";
    display: block;
    width: 4px;
    height: 8px;
    margin: 0 0 0 4px;
    border: solid #333;
    border-width: 0 1px 1px 0;
    transform: rotate(42deg);
  }
`
const ModelRow = styled.div`
  display: grid;
  grid-template-columns: 241px 82px 117px;
  align-items: start;
  height: 21px;
`
const SelectWrap = styled.div`
  display: grid;
  align-items: center;

  svg {
    grid-area: 1 / 1;
    justify-self: end;
    margin-right: 4px;
    pointer-events: none;
  }
`
const Select = styled.select`
  grid-area: 1 / 1;
  width: 100%;
  height: 21px;
  padding: 0 3px;
  appearance: none;
  border: 1px solid #adadad;
  background: #e1e1e1;
`
const Fields = styled.div`
  display: grid;
  gap: 4px;
  margin: 10px 0 0 12px;
`
const FieldRow = styled.div`
  display: flex;
  align-items: center;
`
const FieldLabel = styled.label`
  flex: none;
  width: 230px;
  color: ${props => (props.$muted ? "#a0a0a0" : "#000")};
`
const TextBox = styled.input`
  align-self: start;
  width: 75px;
  height: 20px;
  padding: 0 5px;
  border: 1px solid #7a7a7a;
  background: #fff;

  &:disabled {
    border-color: #ccc;
    color: #6d6d6d;
  }
`
const Unit = styled.span`
  align-self: start;
  width: 41px;
  padding-left: 6px;
  color: ${props => (props.$muted ? "#a0a0a0" : "#000")};
  line-height: 20px;
`
const CheckStack = styled.div`
  display: grid;
  gap: 14px;
`
const RoughnessFields = styled(Fields)`
  margin-top: 12px;
  padding-bottom: 4px;
`
const SolverBody = styled.div`
  min-height: 56px;
  padding-top: 2px;
`
const Button = styled.button`
  height: 22px;
  padding: 0;
  border: 1px solid #adadad;
  background: #e1e1e1;

  &:disabled {
    border-color: #bfbfbf;
    background: #ccc;
    color: #838383;
  }
`
const ProfileButton = styled(Button)`
  width: 81px;
`
const DefaultButton = styled(Button)`
  width: 103px;
  margin: 1px 0 0 1px;
`
const Actions = styled.div`
  display: flex;
  justify-content: flex-end;
  gap: 8px;
  padding: 8px 7px;
`
const ActionButton = styled(Button)`
  width: 73px;
  ${props => props.$primary && css`
    border: 2px solid #0078d7;
  `}
`
const Pointer = styled.svg`
  position: absolute;
  top: 134px;
  left: 144px;
  filter: drop-shadow(1px 3px 2px rgba(0, 0, 0, 0.5));
`
